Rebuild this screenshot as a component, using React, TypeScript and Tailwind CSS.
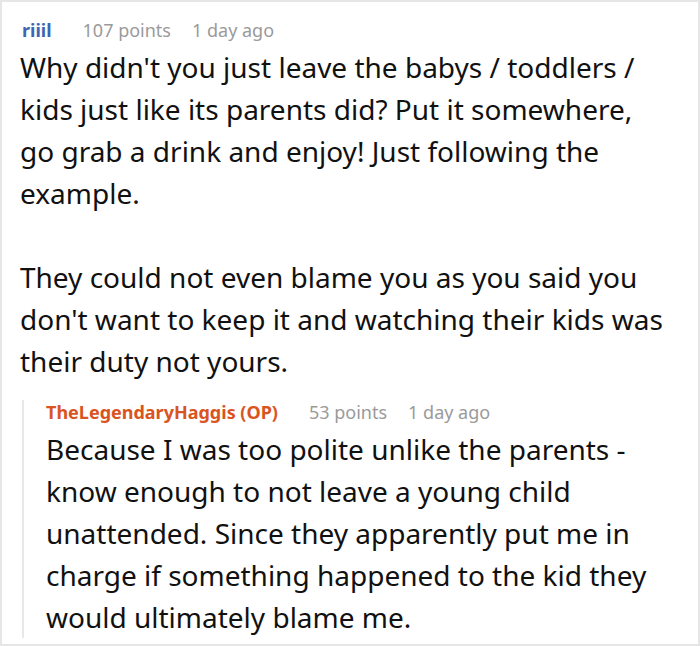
import React from 'react';

const font = { fontFamily: '"Noto Sans", "Open Sans", sans-serif' };

interface MetaProps {
    author: string;
    authorClass: string;
    points: string;
    time: string;
}

const Meta: React.FC<MetaProps> = ({ author, authorClass, points, time }) => (
    <div className="flex items-center text-[18px] leading-[24px]">
        <span className={`font-bold ${authorClass}`}>{author}</span>
        <span className="ml-[31px] text-[#9a9a9a]">{points}</span>
        <span className="ml-[21px] text-[#9a9a9a]">{time}</span>
    </div>
);

const Lines: React.FC<{ lines: string[] }> = ({ lines }) => (
    <p>
        {lines.map((l, i) => (
            <span key={i} className="block whitespace-nowrap">
                {l}
            </span>
        ))}
    </p>
);

const App: React.FC = () => {
    return (
        <div className="w-[700px] h-[646px] bg-white border-2 border-[#e6e6e6] overflow-hidden" style={font}>
            <div className="pl-[18px] pr-[4px] pt-[16px]">
                <div className="pl-[2px]">
                    <Meta author="riiil" authorClass="text-[#3e65b3]" points="107 points" time="1 day ago" />
                </div>
                <div className="text-[28px] leading-[42px] text-[#111] mt-[4px]">
                    <Lines
                        lines={[
                            'Why didn\'t you just leave the babys / toddlers /',
                            'kids just like its parents did? Put it somewhere,',
                            'go grab a drink and enjoy! Just following the',
                            'example.',
                        ]}
                    />
                    <div className="mt-[42px]">
                        <Lines
                            lines={[
                                'They could not even blame you as you said you',
                                'don\'t want to keep it and watching their kids was',
                                'their duty not yours.',
                            ]}
                        />
                    </div>
                </div>
            </div>
            <div className="ml-[20px] mt-[18px] border-l-2 border-[#e8e8e8] pl-[22px] pr-[4px]">
                <Meta
                    author="TheLegendaryHaggis (OP)"
                    authorClass="text-[#d9541e]"
                    points="53 points"
                    time="1 day ago"
                />
                <div className="text-[28px] leading-[42px] text-[#111] mt-[4px]">
                    <Lines
                        lines={[
                            'Because I was too polite unlike the parents -',
                            'know enough to not leave a young child',
                            'unattended. Since they apparently put me in',
                            'charge if something happened to the kid they',
                            'would ultimately blame me.',
                        ]}
                    />
                </div>
            </div>
        </div>
    );
};

export default App;
